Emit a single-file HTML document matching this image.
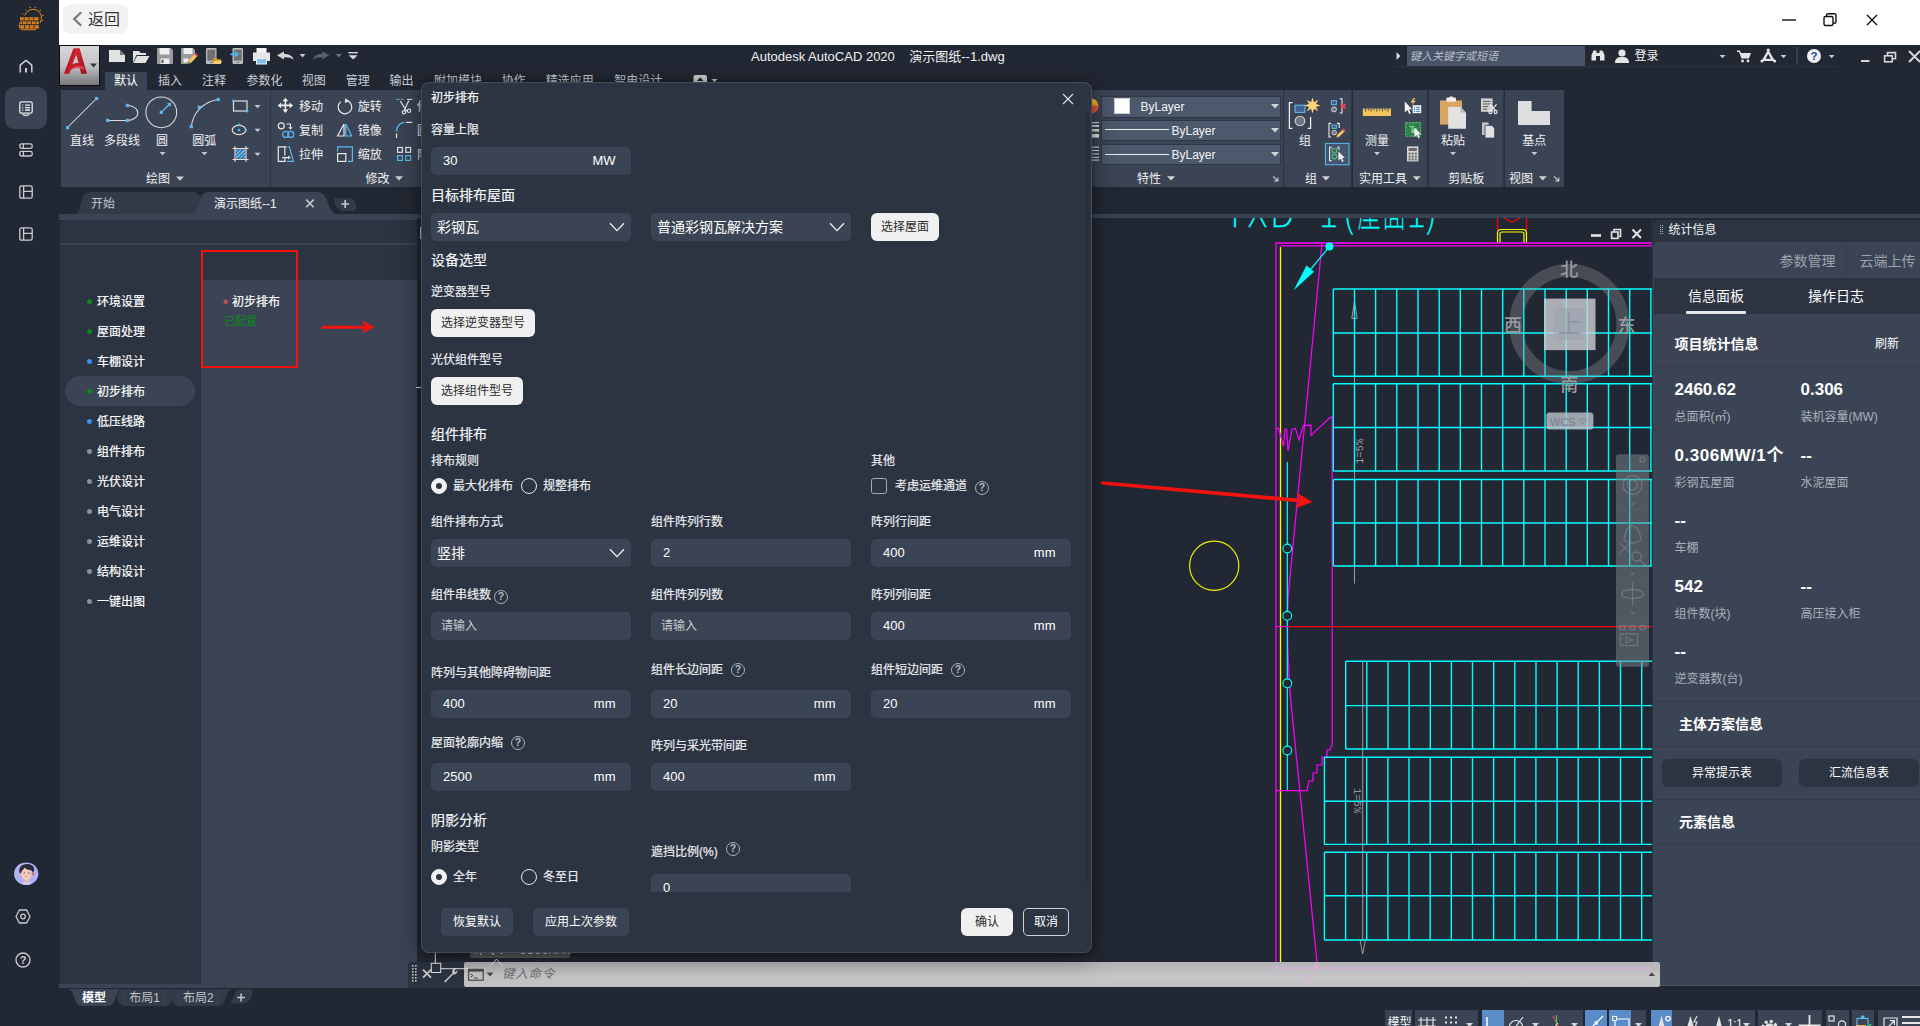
<!DOCTYPE html>
<html lang="zh-CN">
<head>
<meta charset="utf-8">
<title>初步排布</title>
<style>
*{box-sizing:border-box;margin:0;padding:0}
html,body{width:1920px;height:1026px;overflow:hidden;background:#222833}
body{position:relative;font-family:"Liberation Sans","Noto Sans CJK SC",sans-serif;font-size:12px;color:#e6e8ec;line-height:1}
.abs{position:absolute}
.t{position:absolute;white-space:nowrap;line-height:1}
svg{position:absolute;overflow:visible}
/* ---------- app chrome ---------- */
#side{left:0;top:0;width:59px;height:1026px;background:#222833}
#topbar{left:59px;top:0;width:1861px;height:45px;background:#fff}
#back{left:63px;top:4px;width:65px;height:30px;border-radius:8px;background:#f2f2f2}
#back .t{left:25px;top:7.5px;font-size:16px;color:#333}
/* ---------- autocad ---------- */
#cad{left:59px;top:45px;width:1861px;height:981px;background:#222833}
.rp{position:absolute;top:90px;height:96px;background:#3b4454}
.rl{position:absolute;font-size:13px;color:#e8eaee;white-space:nowrap;line-height:1}
.mt{position:absolute;top:73px;font-size:13px;color:#c5cad3;white-space:nowrap;line-height:1}
/* ---------- left workflow panel ---------- */
#wf{left:60px;top:220px;width:354px;height:763px;background:#2c3341;border-radius:4px 4px 0 0}
.nav{position:absolute;left:97px;font-size:12px;color:#fff;white-space:nowrap;line-height:1}
.dot{position:absolute;left:87px;width:5px;height:5px;border-radius:50%}
/* ---------- dialog ---------- */
#dlg{left:421px;top:82px;width:671px;height:870.5px;background:#2c3341;border-radius:8px;box-shadow:0 3px 28px rgba(0,0,0,.42),0 1px 6px rgba(0,0,0,.3),inset 0 0 0 1px #434a58}
#dlg .h{position:absolute;left:10px;font-size:14px;color:#f4f5f7;white-space:nowrap;line-height:1;-webkit-text-stroke:.2px #f4f5f7}
#dlg .l{position:absolute;font-size:12px;color:#eceef1;white-space:nowrap;line-height:1;-webkit-text-stroke:.2px #eceef1}
.in{position:absolute;width:200px;height:28px;border-radius:5px;background:#3b4454;font-size:13px;color:#fff;line-height:28px;padding-left:12px;white-space:nowrap}
.in i{position:absolute;right:15.5px;top:0;font-style:normal;font-size:13px}
.in.ph{color:#c9ccd2;padding-left:10px;font-size:12px}
.sel{padding-left:6px;font-size:14px}
.btnw{position:absolute;height:28px;border-radius:6px;background:#f0f0f0;color:#2b2b2b;font-size:12px;line-height:28px;text-align:center;white-space:nowrap}
.btnd{position:absolute;height:28px;border-radius:5px;background:#3b4454;color:#fff;font-size:12px;line-height:28px;text-align:center;white-space:nowrap}
.radio{position:absolute;width:16px;height:16px;border-radius:50%;border:1.3px solid #e8e8e8}
.radio.on{background:#f2f2f2;border-color:#f2f2f2}
.radio.on:after{content:"";position:absolute;left:3.5px;top:3.5px;width:6.4px;height:6.4px;border-radius:50%;background:#2c3341}
.q{position:absolute;width:14px;height:14px;border-radius:50%;border:1.4px solid #adb2bb;color:#b4b8c0;font-size:10.5px;font-weight:bold;line-height:11.2px;text-align:center}
/* ---------- right info panel ---------- */
#info{left:1653px;top:243px;width:267px;height:740px;background:#3b4454}
#info .v{position:absolute;font-size:16px;font-weight:bold;color:#fff;white-space:nowrap;line-height:1}
#info .k{position:absolute;font-size:12px;color:#b9bec8;white-space:nowrap;line-height:1}
#info .s{position:absolute;font-size:13px;font-weight:bold;color:#fff;white-space:nowrap;line-height:1}
.hr{position:absolute;left:0;width:267px;height:1px;background:#4a5364}
</style>
</head>
<body>
<div id="cad" class="abs"></div>
<div id="side" class="abs"></div>
<div id="topbar" class="abs"></div>
<div id="back" class="abs"><span class="t">返回</span></div>
<span class="t" style="left:751px;top:50.0px;font-size:13px;color:#f2f2f2;">Autodesk AutoCAD 2020&nbsp;&nbsp;&nbsp;&nbsp;演示图纸--1.dwg</span>
<div class="abs" style="left:1393px;top:66px;width:446px;height:1px;background:#2b313d;"></div>
<div class="abs" style="left:1407px;top:46px;width:178px;height:20px;background:#4a5468;"></div>
<span class="t" style="left:1410px;top:50.5px;font-size:11px;color:#b9bec8;font-style:italic">键入关键字或短语</span>
<span class="t" style="left:1634.5px;top:50.0px;font-size:12px;color:#f2f2f2;">登录</span>
<div class="abs" style="left:105px;top:72px;width:42px;height:18px;background:#3b4454;border-radius:2px 2px 0 0"></div>
<span class="t" style="left:114px;top:75.1px;font-size:12px;color:#fff;">默认</span>
<span class="t" style="left:158px;top:75.1px;font-size:12px;color:#c9ced6;">插入</span>
<span class="t" style="left:202px;top:75.1px;font-size:12px;color:#c9ced6;">注释</span>
<span class="t" style="left:246.5px;top:75.1px;font-size:12px;color:#c9ced6;">参数化</span>
<span class="t" style="left:301.7px;top:75.1px;font-size:12px;color:#c9ced6;">视图</span>
<span class="t" style="left:345.7px;top:75.1px;font-size:12px;color:#c9ced6;">管理</span>
<span class="t" style="left:389.5px;top:75.1px;font-size:12px;color:#c9ced6;">输出</span>
<span class="t" style="left:434px;top:75.1px;font-size:12px;color:#c9ced6;">附加模块</span>
<span class="t" style="left:501.7px;top:75.1px;font-size:12px;color:#c9ced6;">协作</span>
<span class="t" style="left:545.7px;top:75.1px;font-size:12px;color:#c9ced6;">精选应用</span>
<span class="t" style="left:614.3px;top:75.1px;font-size:12px;color:#c9ced6;">智电设计</span>
<div class="abs" style="left:61px;top:90px;width:209px;height:97px;background:#3b4454;"></div>
<div class="abs" style="left:271px;top:90px;width:160px;height:97px;background:#3b4454;"></div>
<div class="abs" style="left:1085px;top:90px;width:198px;height:97px;background:#3b4454;"></div>
<div class="abs" style="left:1284px;top:90px;width:67px;height:97px;background:#3b4454;"></div>
<div class="abs" style="left:1352.5px;top:90px;width:75px;height:97px;background:#3b4454;"></div>
<div class="abs" style="left:1428.5px;top:90px;width:75px;height:97px;background:#3b4454;"></div>
<div class="abs" style="left:1504.5px;top:90px;width:59.5px;height:97px;background:#3b4454;"></div>
<span class="t" style="left:70px;top:134.5px;font-size:12px;color:#f0f1f3;">直线</span>
<span class="t" style="left:104px;top:134.5px;font-size:12px;color:#f0f1f3;">多段线</span>
<span class="t" style="left:156px;top:134.5px;font-size:12px;color:#f0f1f3;">圆</span>
<span class="t" style="left:192.3px;top:134.5px;font-size:12px;color:#f0f1f3;">圆弧</span>
<span class="t" style="left:146px;top:173.2px;font-size:12px;color:#f0f1f3;">绘图</span>
<span class="t" style="left:299px;top:100.5px;font-size:12px;color:#f0f1f3;">移动</span>
<span class="t" style="left:357.8px;top:100.5px;font-size:12px;color:#f0f1f3;">旋转</span>
<span class="t" style="left:417px;top:100.5px;font-size:12px;color:#f0f1f3;">修剪</span>
<span class="t" style="left:299px;top:124.5px;font-size:12px;color:#f0f1f3;">复制</span>
<span class="t" style="left:357.8px;top:124.5px;font-size:12px;color:#f0f1f3;">镜像</span>
<span class="t" style="left:417px;top:124.5px;font-size:12px;color:#f0f1f3;">圆角</span>
<span class="t" style="left:299px;top:148.6px;font-size:12px;color:#f0f1f3;">拉伸</span>
<span class="t" style="left:357.8px;top:148.6px;font-size:12px;color:#f0f1f3;">缩放</span>
<span class="t" style="left:417px;top:148.6px;font-size:12px;color:#f0f1f3;">阵列</span>
<span class="t" style="left:365.5px;top:173.2px;font-size:12px;color:#f0f1f3;">修改</span>
<div class="abs" style="left:1101px;top:95.5px;width:180px;height:22px;background:#4c586c;border:1px solid #2f3644"></div>
<div class="abs" style="left:1101px;top:119.5px;width:180px;height:21px;background:#4c586c;border:1px solid #2f3644"></div>
<div class="abs" style="left:1101px;top:143.5px;width:180px;height:21px;background:#4c586c;border:1px solid #2f3644"></div>
<div class="abs" style="left:1114px;top:98px;width:16px;height:16px;background:#fff;border:1px solid #d0d0d0"></div>
<span class="t" style="left:1140.5px;top:100.5px;font-size:12px;color:#f4f4f4;">ByLayer</span>
<span class="t" style="left:1171.5px;top:125.0px;font-size:12px;color:#f4f4f4;">ByLayer</span>
<span class="t" style="left:1171.5px;top:149.0px;font-size:12px;color:#f4f4f4;">ByLayer</span>
<div class="abs" style="left:1105px;top:129px;width:64px;height:1px;background:#f0f0f0;"></div>
<div class="abs" style="left:1105px;top:153.5px;width:64px;height:1px;background:#f0f0f0;"></div>
<span class="t" style="left:1137px;top:173.2px;font-size:12px;color:#f0f1f3;">特性</span>
<span class="t" style="left:1299px;top:134.5px;font-size:12px;color:#f0f1f3;">组</span>
<span class="t" style="left:1305px;top:173.2px;font-size:12px;color:#f0f1f3;">组</span>
<span class="t" style="left:1365px;top:134.5px;font-size:12px;color:#f0f1f3;">测量</span>
<span class="t" style="left:1359px;top:173.2px;font-size:12px;color:#f0f1f3;">实用工具</span>
<span class="t" style="left:1441px;top:134.5px;font-size:12px;color:#f0f1f3;">粘贴</span>
<span class="t" style="left:1448.3px;top:173.2px;font-size:12px;color:#f0f1f3;">剪贴板</span>
<span class="t" style="left:1522.3px;top:134.5px;font-size:12px;color:#f0f1f3;">基点</span>
<span class="t" style="left:1509px;top:173.2px;font-size:12px;color:#f0f1f3;">视图</span>
<svg style="left:0;top:0" width="1920" height="230" viewBox="0 0 1920 230">
<path d="M72 215 C79 215 79 209 81 203 C83 196 84 192 91 192 H193 C200 192 201 198 201 203 C201 210 198 215 190 215 Z" fill="#333a48"/>
<path d="M188 215 C196 215 197 209 199 203 C201 196 202 192 209 192 H317 C324 192 326 197 328 203 C330 210 333 215 341 215 Z" fill="#3b4454"/>
<path d="M334 198 H349 C354 198 356 203 356 206 C356 209 355 211 352 211 H343 C337 211 334 204 334 198 Z" fill="#333a48"/>
<path d="M306.2 199.6 L313.6 207.2 M313.6 199.6 L306.2 207.2" stroke="#c3c7cf" stroke-width="1.6"/>
<path d="M341.3 204 H349 M345.2 200 V208" stroke="#c3c7cf" stroke-width="1.6"/>
</svg>
<span class="t" style="left:91px;top:198.0px;font-size:12px;color:#c3c8d1;">开始</span>
<span class="t" style="left:214px;top:198.0px;font-size:12px;color:#f0f1f3;">演示图纸--1</span>
<svg style="left:0;top:0" width="1920" height="200" viewBox="0 0 1920 200">
<defs>
<linearGradient id="agr" x1="0" y1="0" x2="0" y2="1"><stop offset="0" stop-color="#d8d8da"/><stop offset=".5" stop-color="#c2c2c4"/><stop offset="1" stop-color="#767678"/></linearGradient>
<linearGradient id="ared" x1="0" y1="0" x2="1" y2="1"><stop offset="0" stop-color="#e8313a"/><stop offset="1" stop-color="#9c0f17"/></linearGradient>
<path id="dd" d="M-3 -1.5 H3 L0 1.8 Z"/>
</defs>
<!-- A button -->
<rect x="59.5" y="45.5" width="40" height="40" fill="url(#agr)" stroke="#0c0c0c" stroke-width="1"/>
<path d="M64 73.8 L73.6 48.2 H79.6 L87 73.8 H81.2 L79.8 68 C75.6 67 72.6 68.2 70.6 70 L69.4 73.8 Z M72.4 64.6 C74.4 63.2 76.8 62.8 78.6 63.2 L76.2 54.4 Z" fill="url(#ared)" fill-rule="evenodd"/><path d="M66.2 73.8 L74.8 52 L73.6 48.2 L64 73.8 Z" fill="#b5121b" opacity=".55"/><path d="M70.6 70 C73 66 78 64.8 83.4 66.4 L84.6 70.4 C79.6 67.6 74.6 67.8 70.6 70 Z" fill="#f2555c" opacity=".7"/>
<path d="M90 63.6 H97 L93.5 67.4 Z" fill="#2c3341"/>
<!-- QAT -->
<g fill="#e2e2e2">
<path d="M109 50 H120 L125 55 V62 H109 Z"/><path d="M120 50 V55 H125 Z" fill="#222833" opacity=".55"/>
<path d="M133 63 V51 H139 L140.5 53 H146 V55 H136.5 L133 63 Z"/><path d="M137 56 H149.5 L145.5 63 H133.5 Z"/>
</g>
<g>
<path d="M157 48 H171 L173 50 V64 H157 Z" fill="#9a9a9a"/><rect x="159.5" y="48" width="10" height="6.5" fill="#eee"/><rect x="160.5" y="58.5" width="9" height="5.5" fill="#eee"/><rect x="161.5" y="59.8" width="2" height="3.2" fill="#555"/>
<path d="M181 48 H193 L195 50 V58 L189 64 H181 Z" fill="#9a9a9a"/><rect x="183.5" y="48" width="9" height="6" fill="#eee"/><rect x="183.5" y="58.5" width="5" height="4" fill="#eee"/>
<path d="M187.5 63.5 L189 60 L195 53.5 L197.5 56 L191.5 62.5 Z" fill="#f1c45c"/><path d="M194.2 54.3 L195.6 52.8 L198 55.2 L196.7 56.7 Z" fill="#e8464a"/><path d="M187.5 63.5 L188.2 61.8 L189.4 63 Z" fill="#222"/>
<rect x="206" y="48" width="10.5" height="16" rx="1.2" fill="#bdbdbd"/><rect x="207.3" y="49.6" width="8" height="11" fill="#707070"/><rect x="210" y="62" width="2.6" height="1" fill="#777"/>
<path d="M213 64 V58 H216.5 L217.5 59.2 H221 V64 Z" fill="#d79a2b"/><path d="M214.6 60.8 H222 L220.5 64 H213 Z" fill="#f7d272"/>
<rect x="232.5" y="48" width="10.5" height="16" rx="1.2" fill="#bdbdbd"/><rect x="233.8" y="49.6" width="8" height="11" fill="#707070"/><rect x="236.5" y="62" width="2.6" height="1" fill="#777"/>
<path d="M230.5 53.2 H235 V51 L239.5 54.2 L235 57.4 V55.2 H230.5 Z" fill="#4eb3ee"/>
<rect x="256.5" y="48" width="10" height="5" fill="#f4f4f4"/><path d="M253 52.5 H270 V61 H266.5 V58 H256.5 V61 H253 Z" fill="#e6e6e6"/><rect x="256.5" y="58.5" width="10" height="5.5" fill="#7cc4f2" stroke="#f0f0f0" stroke-width="1"/>
<path d="M277 55.3 L284 51.5 V54 C290 54 293 56.5 293.5 60 C291.5 57.8 289 57.2 284 57.3 V59.6 Z" fill="#d6d6d6"/>
<use href="#dd" x="302.5" y="55.6" fill="#c8c8c8"/>
<path d="M329.3 55.3 L322.3 51.5 V54 C316.3 54 313.3 56.5 312.8 60 C314.8 57.8 317.3 57.2 322.3 57.3 V59.6 Z" fill="#5a6270"/>
<use href="#dd" x="338.7" y="55.6" fill="#6e7683"/>
<rect x="348.3" y="52" width="9.6" height="1.4" fill="#d6d6d6"/><path d="M348.6 55.2 H357.6 L353.1 59.6 Z" fill="#d6d6d6"/>
</g>
<!-- tab bar extra icon -->
<rect x="693.5" y="75" width="13.5" height="9" rx="2" fill="#d4d4d4"/><path d="M697 81 L700.2 77.2 L703.4 81 Z" fill="#222833"/><use href="#dd" x="714.5" y="80.5" fill="#c8c8c8"/>
<!-- search row icons -->
<path d="M1396.5 52 L1400.5 56 L1396.5 60 Z" fill="#d6d6d6"/>
<g fill="#e4e4e4">
<path d="M1591.5 60.5 V55 L1593.5 50.5 H1596.5 V53 H1599.5 V50.5 H1602.5 L1604.5 55 V60.5 H1600 V56 H1596 V60.5 Z"/>
<circle cx="1622" cy="53" r="3.6"/><path d="M1615 63 C1615 58 1618 57 1622 57 C1626 57 1629 58 1629 63 Z"/>
<path d="M1737 50.5 H1739.8 L1741 53 H1751 L1749 58.5 H1741.5 L1739 52 H1737 Z"/><circle cx="1742.5" cy="61" r="1.4"/><circle cx="1748" cy="61" r="1.4"/>
</g>
<use href="#dd" x="1722.5" y="56.5" fill="#c8c8c8"/>
<path d="M1768.2 49.5 L1775 61 H1761.5 Z M1768.2 54 L1765.6 58.8 H1770.9 Z" fill="#e4e4e4" fill-rule="evenodd"/><circle cx="1768.2" cy="50" r="1.6" fill="#e4e4e4"/><circle cx="1762" cy="61" r="1.6" fill="#e4e4e4"/><circle cx="1774.6" cy="61" r="1.6" fill="#e4e4e4"/>
<use href="#dd" x="1783.5" y="56.5" fill="#c8c8c8"/>
<rect x="1796.5" y="47" width="1" height="18" fill="#4a5468"/>
<circle cx="1814" cy="56" r="7" fill="#f2f2f2"/><text x="1814" y="60.3" font-size="11.5" font-weight="bold" font-family="Liberation Sans,sans-serif" text-anchor="middle" fill="#1c3fbf">?</text>
<use href="#dd" x="1831.7" y="56.5" fill="#c8c8c8"/>
<rect x="1861" y="60" width="8.5" height="2" fill="#d6d6d6"/>
<g fill="none" stroke="#d6d6d6" stroke-width="1.6"><path d="M1887.5 55 V52.6 H1895.5 V58.8 H1893"/><rect x="1884.6" y="55.8" width="7.6" height="6"/><path d="M1909 51 L1920 62 M1920 51 L1909 62" stroke-width="2"/></g>
<!-- draw panel big icons -->
<g fill="none" stroke="#dcdcdc" stroke-width="1.05">
<path d="M67.5 127.5 L96.5 98.5"/>
<path d="M107.7 120.4 H127.4 A10.4 7.5 0 0 0 127.4 105.4"/>
<circle cx="161.3" cy="112.3" r="15.4"/>
<path d="M191.3 126.6 C193 112 204 101.5 218.3 99.5"/>
</g>
<path d="M161.3 112.3 L169 104.8" stroke="#5bb8f0" stroke-width="1.3"/><path d="M171.4 102.4 L170.4 107 L166.8 103.4 Z" fill="#5bb8f0"/>
<g fill="#5bb8f0">
<rect x="66" y="126" width="3.2" height="3.2"/><rect x="95" y="97" width="3.2" height="3.2"/>
<rect x="106.1" y="118.8" width="3.2" height="3.2"/><rect x="125.8" y="118.8" width="3.2" height="3.2"/><rect x="125.8" y="103.8" width="3.2" height="3.2"/>
<rect x="159.7" y="110.7" width="3.2" height="3.2"/>
<rect x="189.7" y="125" width="3.2" height="3.2"/><rect x="197.7" y="105.7" width="3.2" height="3.2"/><rect x="216.7" y="97.9" width="3.2" height="3.2"/>
</g>
<use href="#dd" x="162.5" y="153.5" fill="#c8c8c8"/><use href="#dd" x="204.4" y="153.5" fill="#c8c8c8"/>
<path d="M176 176.5 H184 L180 180.8 Z" fill="#d0d0d0"/>
<!-- draw panel small icons -->
<g fill="none" stroke="#e0e0e0" stroke-width="1.2">
<rect x="233.5" y="101" width="13.5" height="10"/>
<ellipse cx="239" cy="130" rx="6.8" ry="4.6"/>
<path d="M232.5 148.5 H248.5 M232.5 159.5 H248.5 M235 146.3 V161.7 M246 146.3 V161.7"/>
</g>
<rect x="236" y="149.5" width="9" height="9" fill="#5bb8f0"/><path d="M236 153 L239.5 149.5 M236 156.5 L243 149.5 M238 158.5 L245 151.5 M241.5 158.5 L245 155" stroke="#3b4454" stroke-width="1"/>
<g fill="#5bb8f0"><rect x="232.2" y="99.7" width="2.6" height="2.6"/><rect x="245.7" y="109.7" width="2.6" height="2.6"/><rect x="238" y="123.6" width="2.2" height="2.2"/><rect x="238" y="128.9" width="2.2" height="2.2"/><rect x="244.7" y="128.9" width="2.2" height="2.2"/></g>
<use href="#dd" x="257.5" y="106.5" fill="#c8c8c8"/><use href="#dd" x="257.5" y="130.3" fill="#c8c8c8"/><use href="#dd" x="257.5" y="154.3" fill="#c8c8c8"/>
<rect x="270" y="90" width="1" height="97" fill="#2c3341"/>
<!-- modify icons -->
<g fill="#f0f0f0">
<path d="M285.4 97.7 L288.2 101.2 H286.2 V104.6 H289.6 V102.6 L293.1 105.4 L289.6 108.2 V106.2 H286.2 V109.6 H288.2 L285.4 113.1 L282.6 109.6 H284.6 V106.2 H281.2 V108.2 L277.7 105.4 L281.2 102.6 V104.6 H284.6 V101.2 H282.6 Z"/>
</g>
<g fill="none" stroke="#e8e8e8" stroke-width="1.2">
<path d="M347.3 100.6 A6.8 6.8 0 1 1 340.8 101.6"/>
<circle cx="281.3" cy="125.8" r="3"/>
<path d="M286.5 124 H290.5 V127.6"/>
<path d="M344 124 V136 H337.5 Z"/>
<path d="M396.5 138 V133.5 M406 122.4 H412.2"/>
<path d="M286.5 146.8 H278.3 V161.4 H285 V158"/>
<path d="M284.8 146.8 V155.5"/><path d="M282 157.6 H288.5"/>
<rect x="337.6" y="153.6" width="8.2" height="7.8"/>
<rect x="397.6" y="147.5" width="4.8" height="4.8"/><rect x="405.8" y="147.5" width="4.8" height="4.8"/>
</g>
<path d="M345.2 98.2 L349.6 101.2 L344.8 103 Z" fill="#e8e8e8"/>
<path d="M288.4 127.2 H292.6 L290.5 129.8 Z" fill="#e8e8e8"/>
<path d="M288 155.6 L290.8 157.6 L288 159.6 Z" fill="#e8e8e8"/>
<g fill="none" stroke="#5bb8f0" stroke-width="1.2">
<circle cx="285.6" cy="134.4" r="3"/><circle cx="290.8" cy="134.4" r="3"/>
<path d="M345.8 124 V136 H351.6 Z"/>
<path d="M396.5 131.6 C396.5 126 400 122.6 404.6 122.4"/>
<path d="M287.5 146.8 H289.4 L293.4 161.4 H287"/>
<path d="M337.6 151.5 V146.8 H352.4 V161.4 H348"/>
<rect x="397.6" y="155.6" width="4.8" height="4.8"/><rect x="405.8" y="155.6" width="4.8" height="4.8"/>
</g>
<!-- scissors -->
<path d="M396.3 99.4 H399.5 M401 99.4 H403.5" stroke="#5bb8f0" stroke-width="1"/><path d="M407 99.4 H412.2" stroke="#e8e8e8" stroke-width="1"/>
<g fill="none" stroke="#e8e8e8" stroke-width="1.2"><path d="M400.3 101 L406.8 111.5 M408.8 100.6 L404.2 110.5"/><circle cx="404" cy="112.3" r="1.7"/><circle cx="409" cy="110.8" r="1.7"/></g>
<path d="M395 176.3 H403 L399 180.6 Z" fill="#d0d0d0"/>
<!-- properties -->
<circle cx="1091" cy="106" r="7.5" fill="#f59a23"/><path d="M1091 106 L1098.5 106 A7.5 7.5 0 0 1 1091 113.5 Z" fill="#e5533d"/><path d="M1091 106 V113.5 A7.5 7.5 0 0 1 1086 112 Z" fill="#8a4be0"/><path d="M1091 106 L1091 98.5 A7.5 7.5 0 0 1 1097 102 Z" fill="#f7c53b"/>
<g fill="#e0e0e0"><rect x="1091" y="122" width="8" height="1.2"/><rect x="1091" y="125" width="8" height="1.8"/><rect x="1091" y="129" width="8" height="2.6"/><rect x="1091" y="134" width="8" height="3.6"/>
<rect x="1091" y="146.6" width="8" height="1" /><rect x="1091" y="150" width="8" height="1"/><rect x="1091" y="153.4" width="8" height="1"/><rect x="1091" y="156.8" width="8" height="1"/><rect x="1091" y="159.6" width="8" height="1"/></g>
<g fill="#d4d4d4"><path d="M1271 104 H1279 L1275 108.4 Z"/><path d="M1271 128 H1279 L1275 132.4 Z"/><path d="M1271 152 H1279 L1275 156.4 Z"/><path d="M1167 176.3 H1175 L1171 180.6 Z"/></g>
<path d="M1273.2 176.4 L1277.6 180.8 M1277.8 177.4 V181 H1274.2" fill="none" stroke="#d0d0d0" stroke-width="1.1"/>
<rect x="1283" y="90" width="1.2" height="97" fill="#2c3341"/>
<!-- group panel -->
<g fill="none" stroke="#ececec" stroke-width="1.3"><path d="M1292.5 102.6 H1289.4 V128.4 H1292.5 M1307.6 128.4 H1310.6 V117"/></g>
<rect x="1295" y="105.2" width="10" height="7.2" fill="#40628c" stroke="#5bb8f0" stroke-width="1.1"/>
<circle cx="1300" cy="121" r="4.8" fill="#6f7684" stroke="#cfcfcf" stroke-width="1.1"/>
<path id="star" d="M1312.5 97.5 L1314 102.2 L1318.2 99.8 L1316 104 L1320.6 105.5 L1316 107 L1318.2 111.2 L1314 108.8 L1312.5 113.5 L1311 108.8 L1306.8 111.2 L1309 107 L1304.4 105.5 L1309 104 L1306.8 99.8 L1311 102.2 Z" fill="#ffd27a"/>
<path d="M1322 176.3 H1330 L1326 180.6 Z" fill="#d0d0d0"/>
<!-- small group icons -->
<g fill="none" stroke="#ececec" stroke-width="1.1"><path d="M1339.6 98.8 H1342 V113 H1339.6"/><path d="M1331.2 123.4 H1329 V137 H1331.2 M1337 123.4 H1339.2 V128"/><path d="M1331.8 147.2 H1329.6 V160.8 H1331.8 M1337 147.2 H1339 V150"/></g>
<rect x="1331.4" y="100.6" width="5" height="4" fill="#40628c" stroke="#5bb8f0" stroke-width="1"/><circle cx="1334" cy="109.4" r="2.5" fill="#6f7684" stroke="#cfcfcf" stroke-width="1"/>
<path d="M1340.8 103.8 L1345.4 108.6 M1345.4 103.8 L1340.8 108.6" stroke="#f0424d" stroke-width="1.7"/>
<rect x="1332" y="125" width="4.4" height="3.4" fill="#40628c" stroke="#5bb8f0" stroke-width="1"/><circle cx="1334.2" cy="132.6" r="2.3" fill="#6f7684" stroke="#cfcfcf" stroke-width="1"/>
<path d="M1336.3 137.6 L1337.2 134.8 L1343 129.2 L1345 131.2 L1339.2 136.8 Z" fill="#f1c45c"/><path d="M1342.2 130 L1343.6 128.6 L1345.6 130.6 L1344.2 132 Z" fill="#e8464a"/>
<rect x="1325.4" y="143.4" width="23.6" height="21.4" fill="#43556f" stroke="#5bb8f0" stroke-width="1"/>
<g fill="none" stroke="#ececec" stroke-width="1.1"><path d="M1331.8 147.2 H1329.6 V160.8 H1331.8 M1337 147.2 H1339 V150"/></g>
<rect x="1332.2" y="148.8" width="4.4" height="3.4" fill="none" stroke="#58c46a" stroke-width="1.1"/><circle cx="1334.4" cy="156.4" r="2.3" fill="none" stroke="#58c46a" stroke-width="1.1"/>
<path d="M1338.4 151.4 L1338.4 160.6 L1340.6 158.6 L1342.2 162 L1343.6 161.3 L1342 158 L1344.8 157.8 Z" fill="#f2f2f2"/>
<!-- utilities -->
<rect x="1351" y="90" width="1.4" height="97" fill="#2c3341"/>
<rect x="1362.8" y="108.6" width="28.2" height="7.4" fill="#f2c45c"/><path d="M1365.6 108.6 v3 M1368.4 108.6 v2 M1371.2 108.6 v3 M1374 108.6 v2 M1376.8 108.6 v3 M1379.6 108.6 v2 M1382.4 108.6 v3 M1385.2 108.6 v2 M1388 108.6 v3" stroke="#3b4454" stroke-width=".9"/>
<use href="#dd" x="1377" y="153.5" fill="#c8c8c8"/>
<path d="M1412.8 176.3 H1420.8 L1416.8 180.6 Z" fill="#d0d0d0"/>
<path d="M1404.8 101.6 V112.4 L1407.4 110 L1409.2 114 L1410.8 113.2 L1409 109.4 L1412.2 109.2 Z" fill="#f2f2f2"/><rect x="1412.6" y="105.2" width="8.6" height="8" fill="#f2f2f2"/><path d="M1414 107.4 h1.2 M1416.2 107.4 h3.6 M1414 109.4 h1.2 M1416.2 109.4 h3.6 M1414 111.4 h1.2 M1416.2 111.4 h3.6" stroke="#2f7fd0" stroke-width="1"/><path d="M1413.4 98 L1410.6 102.4 H1413 L1411.6 105.6 L1416 100.8 H1413.4 L1415.2 98 Z" fill="#f2c45c"/>
<rect x="1405.6" y="122.6" width="15" height="13.6" fill="#2f7f4a" stroke="#58c46a" stroke-width="1.1" stroke-dasharray="2 1.2"/><path d="M1408.4 125.4 H1414.6 V131 M1411 128 H1417.6 V133.6 H1411 Z" fill="#7bd08a" stroke="#2f7f4a" stroke-width=".8"/><path d="M1414.4 127.6 V137 L1416.8 135 L1418.4 138.4 L1419.8 137.7 L1418.2 134.4 L1421.2 134.2 Z" fill="#f2f2f2"/>
<rect x="1407" y="146.4" width="11.4" height="15" fill="#d6d6d6"/><rect x="1408.6" y="148" width="8.2" height="3" fill="#6a6a6a"/><g fill="#6a6a6a"><rect x="1408.6" y="152.6" width="2" height="2"/><rect x="1411.7" y="152.6" width="2" height="2"/><rect x="1414.8" y="152.6" width="2" height="2"/><rect x="1408.6" y="155.6" width="2" height="2"/><rect x="1411.7" y="155.6" width="2" height="2"/><rect x="1414.8" y="155.6" width="2" height="2"/><rect x="1408.6" y="158.4" width="2" height="2"/><rect x="1411.7" y="158.4" width="2" height="2"/><rect x="1414.8" y="158.4" width="2" height="2"/></g>
<!-- clipboard -->
<rect x="1427.2" y="90" width="1.4" height="97" fill="#2c3341"/>
<path d="M1440 100.4 H1462 V124.6 H1440 Z" fill="#d9a662"/><rect x="1446.4" y="97.6" width="9.6" height="4.2" rx="1" fill="#ececec"/><rect x="1449.4" y="96.4" width="3.6" height="2.4" rx="1" fill="#ececec"/>
<path d="M1448.2 107 H1460.6 L1466 112.4 V128.8 H1448.2 Z" fill="#e2e2e2"/><path d="M1460.6 107 V112.4 H1466 Z" fill="#b8b8b8"/>
<use href="#dd" x="1453" y="153.5" fill="#c8c8c8"/>
<rect x="1481" y="98.4" width="11.6" height="13.4" fill="#cfcfcf"/><path d="M1483 101.4 h7.6 M1483 104 h7.6 M1483 106.6 h5 M1483 109.2 h4" stroke="#5a5a5a" stroke-width="1"/>
<g fill="none" stroke="#f4f4f4" stroke-width="1.1"><path d="M1490 104.4 L1495.6 110.6 M1496.6 104.4 L1491 110.6"/><circle cx="1490.4" cy="112" r="1.6"/><circle cx="1495.6" cy="112" r="1.6"/></g>
<path d="M1482 122.4 H1488.6 V135 H1482 Z" fill="#c4c4c4"/><path d="M1485 125.4 H1491.8 L1494.6 128.2 V138 H1485 Z" fill="#e2e2e2" stroke="#3b4454" stroke-width=".8"/>
<!-- view -->
<rect x="1503.2" y="90" width="1.4" height="97" fill="#2c3341"/>
<path d="M1518 101 H1531.6 V111 H1550 V125 H1518 Z" fill="#dedede"/>
<use href="#dd" x="1534.3" y="153.5" fill="#c8c8c8"/>
<path d="M1538.8 176.3 H1546.8 L1542.8 180.6 Z" fill="#d0d0d0"/>
<path d="M1554.2 176.4 L1558.6 180.8 M1558.8 177.4 V181 H1555.2" fill="none" stroke="#d0d0d0" stroke-width="1.1"/>
</svg>

<svg style="left:14px;top:4px" width="32" height="30" viewBox="14 4 32 30">
<g fill="none" stroke="#f08a16" stroke-width="1" stroke-linecap="round">
<path d="M24.9 15 A8.6 8.6 0 1 1 40.2 22.6"/>
<path d="M19.6 23.6 C18.2 27.2 20.2 30 23.4 29.7 H35.6"/>
</g>
<g fill="#f08a16"><circle cx="30.3" cy="7.4" r=".7"/><circle cx="35.4" cy="7.6" r=".7"/><circle cx="40.2" cy="10.4" r=".7"/><circle cx="42.9" cy="15.4" r=".7"/><circle cx="42.6" cy="20.6" r=".7"/><circle cx="25.8" cy="9.8" r=".6"/><circle cx="22.8" cy="13.8" r=".6"/>
<path d="M20 17.3 H38.4 L38.8 28.4 H20.6 Z"/></g>
<g stroke="#222833" stroke-width="1" fill="none">
<path d="M19.6 20.9 H39 M19.8 24.7 H39.2"/>
<path d="M24.2 17 V20.9 M28.8 17 V20.9 M33.6 17 V20.9 M22.4 20.9 V24.7 M27 20.9 V24.7 M31.4 20.9 V24.7 M36 20.9 V24.7 M24.6 24.7 V28.6 M29.4 24.7 V28.6 M34 24.7 V28.6" stroke-width=".9"/>
<path d="M21 18.9 h2.2 M25.4 18.9 h2.4 M30 18.9 h2.6 M34.8 18.9 h2.4 M23.6 22.8 h2.2 M28.2 22.8 h2.2 M32.6 22.8 h2.4 M21.8 26.6 h1.8 M25.8 26.6 h2.4 M30.6 26.6 h2.4 M35.2 26.6 h2.2" stroke-width=".7" opacity=".55"/>
</g></svg>
<svg style="left:19px;top:59px" width="14" height="15" viewBox="0 0 14 15"><path d="M1.2 13.6 V6.2 L7 1.4 L12.8 6.2 V13.6" fill="none" stroke="#c9cdd5" stroke-width="1.5" stroke-linejoin="round"/><path d="M7 9 V13.6" stroke="#c9cdd5" stroke-width="2"/></svg>
<div class="abs" style="left:5px;top:87px;width:42px;height:42px;background:#3b4454;border-radius:9px"></div>
<svg style="left:19px;top:101px" width="14" height="15" viewBox="0 0 14 15"><g fill="none" stroke="#e8eaee" stroke-width="1.3"><rect x=".8" y=".8" width="12.4" height="11.4" rx="1.6"/><path d="M3.2 4.2 h1 M6 4.2 h5 M3.2 6.6 h1 M6 6.6 h5 M3.2 9 h1 M6 9 h5"/><path d="M3.5 13.6 q3.5 1.6 7 0" stroke-width="1.1"/></g></svg>
<svg style="left:19px;top:143px" width="14" height="14" viewBox="0 0 14 14"><g fill="none" stroke="#c9cdd5" stroke-width="1.3"><rect x=".8" y=".8" width="12.4" height="4.6" rx="1.8"/><rect x=".8" y="8.4" width="12.4" height="4.6" rx="1.8"/><path d="M4.4 .8 v4.6 M4.4 8.4 v4.6"/></g></svg>
<svg style="left:19px;top:185px" width="14" height="14" viewBox="0 0 14 14"><g fill="none" stroke="#c9cdd5" stroke-width="1.3"><rect x=".8" y=".8" width="12.4" height="12.4" rx="1.8"/><path d="M4.6 .8 v12.4 M4.6 6.4 h8.6"/></g></svg>
<svg style="left:19px;top:227px" width="14" height="14" viewBox="0 0 14 14"><g fill="none" stroke="#c9cdd5" stroke-width="1.3"><rect x=".8" y=".8" width="12.4" height="12.4" rx="1.8"/><path d="M4.6 .8 v12.4 M4.6 6.4 h8.6"/></g></svg>
<svg style="left:14px;top:861.5px" width="24.4" height="23.4" viewBox="0 0 24.4 23.4"><defs><clipPath id="av"><ellipse cx="12.2" cy="11.7" rx="12.2" ry="11.3"/></clipPath></defs>
<g clip-path="url(#av)"><rect width="25" height="24" fill="#b2b0f6"/>
<path d="M8.2 24 C8.6 19.6 10.4 18 12.6 18 C15.2 18 16.8 19.6 17.4 24 Z" fill="#cfc6f4"/>
<path d="M10.6 17 H14.4 V19.4 L12.5 21 L10.6 19.4 Z" fill="#e9b7a4"/>
<circle cx="6.6" cy="12.6" r="1.1" fill="#f0b48c"/><circle cx="19" cy="12.2" r="1.25" fill="#e8703a"/>
<ellipse cx="12.6" cy="12.6" rx="5" ry="5.6" fill="#f4cbb8"/><ellipse cx="12.4" cy="9.6" rx="5.2" ry="4" fill="#f4cbb8"/>
<path d="M5.4 10.6 C4.6 6.4 7 3 9.6 2.8 C12.2 1.4 16.8 1.8 18.8 4 C20.8 5.6 20.6 8.8 19 11.2 C18.6 9.4 17.8 8.4 16.6 8.2 C13.6 8 11.6 6.8 10.4 5.6 C9.6 7.8 7.6 8.8 6.8 11.4 Z" fill="#2b2a3a"/>
<rect x="8.6" y="9.6" width="3" height="2.4" rx=".8" fill="#d8d6c6" opacity=".8"/><rect x="13.6" y="9.8" width="2.6" height="2.2" rx=".8" fill="#c9c8c2" opacity=".65"/>
<circle cx="10.2" cy="10.9" r=".55" fill="#4a3a3a"/><circle cx="14.8" cy="10.9" r=".55" fill="#4a3a3a"/>
<ellipse cx="12.2" cy="14.4" rx=".9" ry=".7" fill="#e9897a"/></g></svg>
<svg style="left:15px;top:908px" width="16" height="17" viewBox="0 0 16 17"><g fill="none" stroke="#c9cdd5" stroke-width="1.3" stroke-linejoin="round"><path d="M4.4 2 h7.2 L15 8.5 L11.6 15 H4.4 L1 8.5 Z"/><circle cx="8" cy="8.5" r="2.3"/></g></svg>
<svg style="left:15px;top:951.7px" width="16" height="16" viewBox="0 0 16 16"><circle cx="8" cy="8" r="7" fill="none" stroke="#c9cdd5" stroke-width="1.3"/><text x="8" y="12" font-size="11" font-family="Liberation Sans,sans-serif" font-weight="bold" fill="#c9cdd5" text-anchor="middle">?</text></svg>
<svg style="left:72px;top:11px" width="11" height="16" viewBox="0 0 11 16"><path d="M9.2 1.2 L2.2 8 L9.2 14.8" fill="none" stroke="#7b7b7b" stroke-width="2.3"/></svg>
<svg style="left:1780px;top:10px" width="110" height="20" viewBox="0 0 110 20"><g fill="none" stroke="#111" stroke-width="1.4"><path d="M2 10 h14"/><rect x="44" y="6.5" width="9" height="9" rx="1.5"/><path d="M46.5 6.5 v-1.2 a1.5 1.5 0 0 1 1.5-1.5 h6.5 a1.5 1.5 0 0 1 1.5 1.5 v6.5 a1.5 1.5 0 0 1 -1.5 1.5 h-1.2"/><path d="M87 5 l10 10 M97 5 l-10 10"/></g></svg>
<div class="abs" style="left:59px;top:214px;width:1861px;height:4.2px;background:#3b4454;"></div>
<div class="abs" style="left:59px;top:215px;width:362px;height:5px;background:#3b4454;"></div>
<div class="abs" style="left:59.5px;top:220px;width:357px;height:764px;background:#2c3341;border-radius:5px 5px 0 0"></div>
<div class="abs" style="left:59.5px;top:243px;width:357px;height:1.5px;background:#3b4454;"></div>
<div class="abs" style="left:201px;top:280px;width:215.5px;height:704px;background:#3b4454;"></div>
<div class="abs" style="left:416.5px;top:218px;width:4.5px;height:770px;background:#222833;"></div>
<div class="abs" style="left:419.5px;top:227px;width:1px;height:11.5px;background:#c8c8c8;"></div>
<div class="abs" style="left:416px;top:387px;width:5px;height:1px;background:#e0e0e0;"></div>
<div class="abs" style="left:59px;top:984px;width:358px;height:4px;background:#3b4454;"></div>
<div class="abs" style="left:65px;top:376px;width:130px;height:30px;background:#3b4454;border-radius:15px"></div>
<span class="dot" style="top:299.0px;background:#0a8a1a"></span>
<span class="t" style="left:97px;top:295.5px;font-size:12px;color:#fff;-webkit-text-stroke:.2px #fff">环境设置</span>
<span class="dot" style="top:329.0px;background:#0a8a1a"></span>
<span class="t" style="left:97px;top:325.5px;font-size:12px;color:#fff;-webkit-text-stroke:.2px #fff">屋面处理</span>
<span class="dot" style="top:359.0px;background:#3a8ff0"></span>
<span class="t" style="left:97px;top:355.5px;font-size:12px;color:#fff;-webkit-text-stroke:.2px #fff">车棚设计</span>
<span class="dot" style="top:389.0px;background:#0a8a1a"></span>
<span class="t" style="left:97px;top:385.5px;font-size:12px;color:#fff;-webkit-text-stroke:.2px #fff">初步排布</span>
<span class="dot" style="top:419.0px;background:#3a8ff0"></span>
<span class="t" style="left:97px;top:415.5px;font-size:12px;color:#fff;-webkit-text-stroke:.2px #fff">低压线路</span>
<span class="dot" style="top:449.0px;background:#8a8f98"></span>
<span class="t" style="left:97px;top:445.5px;font-size:12px;color:#fff;-webkit-text-stroke:.2px #fff">组件排布</span>
<span class="dot" style="top:479.0px;background:#8a8f98"></span>
<span class="t" style="left:97px;top:475.5px;font-size:12px;color:#fff;-webkit-text-stroke:.2px #fff">光伏设计</span>
<span class="dot" style="top:509.0px;background:#8a8f98"></span>
<span class="t" style="left:97px;top:505.5px;font-size:12px;color:#fff;-webkit-text-stroke:.2px #fff">电气设计</span>
<span class="dot" style="top:539.0px;background:#8a8f98"></span>
<span class="t" style="left:97px;top:535.5px;font-size:12px;color:#fff;-webkit-text-stroke:.2px #fff">运维设计</span>
<span class="dot" style="top:569.0px;background:#8a8f98"></span>
<span class="t" style="left:97px;top:565.5px;font-size:12px;color:#fff;-webkit-text-stroke:.2px #fff">结构设计</span>
<span class="dot" style="top:599.0px;background:#8a8f98"></span>
<span class="t" style="left:97px;top:595.5px;font-size:12px;color:#fff;-webkit-text-stroke:.2px #fff">一键出图</span>
<div class="abs" style="left:201px;top:250px;width:97px;height:118px;background:transparent;border:2px solid #f5120f"></div>
<span class="t" style="left:222.6px;top:295.7px;font-size:15px;color:#ee5a52;">*</span>
<span class="t" style="left:232px;top:295.5px;font-size:12px;color:#fff;-webkit-text-stroke:.2px #fff">初步排布</span>
<span class="t" style="left:224px;top:316.0px;font-size:11px;color:#0a8a1a;">已配置</span>
<svg style="left:320px;top:318px" width="58" height="18" viewBox="0 0 58 18"><path d="M3 9.3 H44" stroke="#f5120f" stroke-width="3" stroke-linecap="round"/><path d="M54.5 9 L42 2.6 L45 9 L42 15.6 Z" fill="#f5120f"/></svg>
<svg style="left:0;top:0" width="1920" height="1026" viewBox="0 0 1920 1026">
<defs><clipPath id="vp"><rect x="1092" y="218" width="560" height="744"/></clipPath></defs>
<g clip-path="url(#vp)">
<g font-size="40" font-weight="100" font-family="Noto Sans CJK SC,sans-serif" fill="#00ffff" stroke="#00ffff" stroke-width=".5"><text transform="scale(.92 1)" y="227.5" x="1331.1 1356.5 1380.4 1408.7 1433.7 1459.8 1529 1550">TXD-1(1)</text><text transform="scale(.58 1)" y="226.5" x="2340.7 2383.6">屋面</text></g>
<path d="M1497.5 218 V230 M1526.5 218 V230 M1504 218 L1512 222 L1520 218" fill="none" stroke="#ff0000" stroke-width="1.3"/>
<path d="M1497.5 243 V233 Q1497.5 229.5 1501 229.5 H1523 Q1526.5 229.5 1526.5 233 V243 M1500 243 V234 Q1500 232 1502 232 H1522 Q1524 232 1524 234 V243" fill="none" stroke="#ffff00" stroke-width="1.2"/>
<path d="M1276 962 V243 H1652 M1280.5 245.9 H1652" fill="none" stroke="#ff00ff" stroke-width="1.3"/>
<path d="M1280.5 247 V962" stroke="#ffff00" stroke-width="1.3"/>
<path d="M1322 243 L1288.2 596 Q1286 640 1290.7 700 L1317 962" fill="none" stroke="#ff00ff" stroke-width="1.2"/>
<path d="M1276 428.4 L1278.4 428.4 L1283.6 446 L1285 429 L1286.6 429 L1288 451 L1292 429.4 L1295.4 428.4 L1299 440 L1303.4 425.4 L1311 425.2 V435.4 L1330 417.6 L1332.2 417 V744 L1330 750 H1327 V757 H1322 V765 H1317 V773 H1313 V781 H1309 L1307 790.6 H1276" fill="none" stroke="#ff00ff" stroke-width="1.2"/>
<circle cx="1329.4" cy="246.6" r="4" fill="#00ffff"/><path d="M1329.4 246.6 L1306 275" stroke="#00ffff" stroke-width="1.2"/><path d="M1293.7 290.3 L1306.5 265.5 L1314 271.8 Z" fill="#00ffff"/>
<path d="M1287.3 462 V790" stroke="#00ffff" stroke-width="1.2"/>
<circle cx="1287.3" cy="548.5" r="4.4" fill="#222833" stroke="#00ffff" stroke-width="1.1"/>
<circle cx="1287.3" cy="615.8" r="4.4" fill="#222833" stroke="#00ffff" stroke-width="1.1"/>
<circle cx="1287.3" cy="683.3" r="4.4" fill="#222833" stroke="#00ffff" stroke-width="1.1"/>
<circle cx="1287.3" cy="750.5" r="4.4" fill="#222833" stroke="#00ffff" stroke-width="1.1"/>
<path d="M1287.3 626.6 H1652" stroke="#ff0000" stroke-width="1.3"/><path d="M1276 626.6 H1287" stroke="#ff00ff" stroke-width="1.2"/>
<path d="M1354.5 318 V583.5 M1354.5 301.5 L1351.8 318.5 H1357.2 Z" fill="none" stroke="#9a9a9a" stroke-width="1"/>
<path d="M1362.7 661 V940 M1362.7 954 L1360 940 H1365.4 Z" fill="none" stroke="#9a9a9a" stroke-width="1"/>
<text transform="translate(1362.5 464) rotate(-90)" font-size="10.5" font-family="Liberation Mono,monospace" fill="#9a9a9a">1=5%</text>
<text transform="translate(1354 788) rotate(90)" font-size="10.5" font-family="Liberation Mono,monospace" fill="#9a9a9a">1=5%</text>
<path d="M1333.3 289 H1660 M1333.3 333 H1660 M1333.3 376.3 H1660 M1333.3 289 V376.3 M1354.5 289 V376.3 M1375.6 289 V376.3 M1396.8 289 V376.3 M1418.0 289 V376.3 M1439.2 289 V376.3 M1460.3 289 V376.3 M1481.5 289 V376.3 M1502.7 289 V376.3 M1523.8 289 V376.3 M1545.0 289 V376.3 M1566.2 289 V376.3 M1587.3 289 V376.3 M1608.5 289 V376.3 M1629.7 289 V376.3 M1650.9 289 V376.3" fill="none" stroke="#00ffff" stroke-width="1.4"/>
<path d="M1333.3 383.7 H1660 M1333.3 427.5 H1660 M1333.3 471 H1660 M1333.3 383.7 V471 M1354.5 383.7 V471 M1375.6 383.7 V471 M1396.8 383.7 V471 M1418.0 383.7 V471 M1439.2 383.7 V471 M1460.3 383.7 V471 M1481.5 383.7 V471 M1502.7 383.7 V471 M1523.8 383.7 V471 M1545.0 383.7 V471 M1566.2 383.7 V471 M1587.3 383.7 V471 M1608.5 383.7 V471 M1629.7 383.7 V471 M1650.9 383.7 V471" fill="none" stroke="#00ffff" stroke-width="1.4"/>
<path d="M1333.3 479.5 H1660 M1333.3 523 H1660 M1333.3 566 H1660 M1333.3 479.5 V566 M1354.5 479.5 V566 M1375.6 479.5 V566 M1396.8 479.5 V566 M1418.0 479.5 V566 M1439.2 479.5 V566 M1460.3 479.5 V566 M1481.5 479.5 V566 M1502.7 479.5 V566 M1523.8 479.5 V566 M1545.0 479.5 V566 M1566.2 479.5 V566 M1587.3 479.5 V566 M1608.5 479.5 V566 M1629.7 479.5 V566 M1650.9 479.5 V566" fill="none" stroke="#00ffff" stroke-width="1.4"/>
<path d="M1345.7 661.3 H1660 M1345.7 705.6 H1660 M1345.7 749 H1660 M1345.7 661.3 V749 M1366.8 661.3 V749 M1388.0 661.3 V749 M1409.1 661.3 V749 M1430.3 661.3 V749 M1451.4 661.3 V749 M1472.5 661.3 V749 M1493.7 661.3 V749 M1514.8 661.3 V749 M1536.0 661.3 V749 M1557.1 661.3 V749 M1578.2 661.3 V749 M1599.4 661.3 V749 M1620.5 661.3 V749 M1641.7 661.3 V749" fill="none" stroke="#00ffff" stroke-width="1.4"/>
<path d="M1324.4 757.3 H1660 M1324.4 801.3 H1660 M1324.4 844.4 H1660 M1324.4 757.3 V844.4 M1345.6 757.3 V844.4 M1366.7 757.3 V844.4 M1387.9 757.3 V844.4 M1409.0 757.3 V844.4 M1430.2 757.3 V844.4 M1451.3 757.3 V844.4 M1472.5 757.3 V844.4 M1493.6 757.3 V844.4 M1514.8 757.3 V844.4 M1535.9 757.3 V844.4 M1557.1 757.3 V844.4 M1578.2 757.3 V844.4 M1599.4 757.3 V844.4 M1620.5 757.3 V844.4 M1641.7 757.3 V844.4" fill="none" stroke="#00ffff" stroke-width="1.4"/>
<path d="M1324.4 852.3 H1660 M1324.4 895.8 H1660 M1324.4 940 H1660 M1324.4 852.3 V940 M1345.6 852.3 V940 M1366.7 852.3 V940 M1387.9 852.3 V940 M1409.0 852.3 V940 M1430.2 852.3 V940 M1451.3 852.3 V940 M1472.5 852.3 V940 M1493.6 852.3 V940 M1514.8 852.3 V940 M1535.9 852.3 V940 M1557.1 852.3 V940 M1578.2 852.3 V940 M1599.4 852.3 V940 M1620.5 852.3 V940 M1641.7 852.3 V940" fill="none" stroke="#00ffff" stroke-width="1.4"/>
<circle cx="1214.2" cy="565.8" r="24.6" fill="none" stroke="#ecec00" stroke-width="1.2"/>
<path d="M1102.5 483 L1300 500.6" stroke="#f5120f" stroke-width="3.6" stroke-linecap="round"/><path d="M1312.5 502 L1296.5 492.5 L1299.8 500.6 L1295 508.5 Z" fill="#f5120f"/>
<g fill="none" stroke="#e4e4e4" stroke-width="1.6"><path d="M1591 235.5 H1601" stroke-width="2.6"/><path d="M1614 231.5 V229.5 H1620.5 V236.5 H1619"/><rect x="1611.6" y="232" width="6.4" height="6.4"/><path d="M1632.5 229.5 L1641 238 M1641 229.5 L1632.5 238" stroke-width="2"/></g>
<circle cx="1569.3" cy="324" r="53.5" fill="none" stroke="rgba(150,153,160,.32)" stroke-width="13"/>
<rect x="1544" y="298.6" width="51.5" height="51.5" fill="rgba(210,212,216,.78)"/><rect x="1553.5" y="308" width="32" height="32" fill="rgba(150,158,172,.45)"/>
<text x="1569.5" y="333" font-size="24" font-family="Noto Sans CJK SC,sans-serif" fill="#8c97a3" text-anchor="middle">上</text>
<text x="1569.3" y="276" font-size="18" font-weight="500" font-family="Noto Sans CJK SC,sans-serif" fill="#999a9e" text-anchor="middle">北</text>
<text x="1569.3" y="391" font-size="18" font-weight="500" font-family="Noto Sans CJK SC,sans-serif" fill="#999a9e" text-anchor="middle">南</text>
<text x="1513" y="331.5" font-size="18" font-weight="500" font-family="Noto Sans CJK SC,sans-serif" fill="#999a9e" text-anchor="middle">西</text>
<text x="1626.5" y="331.5" font-size="18" font-weight="500" font-family="Noto Sans CJK SC,sans-serif" fill="#999a9e" text-anchor="middle">东</text>
<rect x="1546.4" y="412.6" width="47" height="17" rx="3" fill="rgba(190,195,205,.8)"/><text x="1550" y="425.5" font-size="11" font-family="Liberation Sans,sans-serif" fill="#7a7f88">WCS</text><path d="M1579.5 419 H1586.5 L1583 424 Z" fill="none" stroke="#8a8f98" stroke-width="1"/>
<rect x="1616" y="454.3" width="33" height="212.5" rx="3" fill="rgba(125,130,138,.52)"/>
<g fill="none" stroke="rgba(150,155,162,.42)" stroke-width="1.3"><circle cx="1642.5" cy="459.5" r="2.6"/><circle cx="1632.5" cy="485" r="9.5"/><circle cx="1632.5" cy="485" r="5"/><path d="M1624 540 q2-14 8-14 q7 0 9 14 q-8 6-17 0z"/><path d="M1620 543.5 L1630 553 M1620 553 L1630 543.5"/><circle cx="1636.5" cy="556.5" r="4.5"/><path d="M1640 560 L1645 565"/><ellipse cx="1632.5" cy="594" rx="11" ry="4.5"/><path d="M1632.5 582 V606"/><rect x="1620.5" y="634" width="17" height="11.5"/><path d="M1626 637 L1632 640 L1626 643 Z"/><rect x="1620" y="625.5" width="5" height="4"/><rect x="1630" y="625.5" width="5" height="4"/><rect x="1640" y="625.5" width="5" height="4"/></g>
<g fill="rgba(110,114,122,.8)"><path d="M1630 503 h5 l-2.5 3z"/><path d="M1630 573 h5 l-2.5 3z"/><path d="M1630 612 h5 l-2.5 3z"/></g>
<path d="M1617 475 H1648 M1617 510 H1648 M1617 580 H1648 M1617 620 H1648" stroke="rgba(100,105,112,.45)" stroke-width="1"/>
</g>
<rect x="1652" y="218" width="1.5" height="744" fill="#2c3341"/>
</svg>
<div class="abs" style="left:1654px;top:220px;width:266px;height:23px;background:#2c3341;border-radius:5px 0 0 0"></div>
<svg style="left:1660px;top:225px" width="4" height="10" viewBox="0 0 4 10"><g fill="#aeb3bd"><rect x="0" y="0" width="1" height="1"/><rect x="2" y="0" width="1" height="1"/><rect x="0" y="2" width="1" height="1"/><rect x="2" y="2" width="1" height="1"/><rect x="0" y="4" width="1" height="1"/><rect x="2" y="4" width="1" height="1"/><rect x="0" y="6" width="1" height="1"/><rect x="2" y="6" width="1" height="1"/><rect x="0" y="8" width="1" height="1"/><rect x="2" y="8" width="1" height="1"/></g></svg>
<span class="t" style="left:1668.5px;top:224.0px;font-size:12px;color:#f2f3f5;">统计信息</span>
<div class="abs" style="left:1653px;top:242px;width:267px;height:744px;background:#3b4454;border-radius:4px 0 0 0"></div>
<span class="t" style="left:1779.5px;top:254.0px;font-size:14px;color:#9da3ae;">参数管理</span>
<div class="abs" style="left:1846px;top:246px;width:1px;height:30px;background:#333a48;"></div>
<span class="t" style="left:1859.5px;top:254.0px;font-size:14px;color:#9da3ae;">云端上传</span>
<div class="abs" style="left:1654px;top:278px;width:266px;height:36px;background:#2c3341;"></div>
<span class="t" style="left:1688px;top:289.0px;font-size:14px;color:#fff;">信息面板</span>
<div class="abs" style="left:1686px;top:311px;width:60px;height:3px;background:#e4e6ea;border-radius:1px"></div>
<span class="t" style="left:1808px;top:289.0px;font-size:14px;color:#fff;">操作日志</span>
<span class="t" style="left:1674.5px;top:337.0px;font-size:14px;color:#fff;font-weight:bold;">项目统计信息</span>
<span class="t" style="left:1875px;top:338.0px;font-size:12px;color:#fff;">刷新</span>
<div class="abs" style="left:1654px;top:366px;width:266px;height:1px;background:#333a48;"></div>
<span class="t" style="left:1674.5px;top:380.5px;font-size:17px;color:#fff;font-weight:bold;">2460.62</span>
<span class="t" style="left:1800.5px;top:380.5px;font-size:17px;color:#fff;font-weight:bold;">0.306</span>
<span class="t" style="left:1674.5px;top:410.5px;font-size:12px;color:#aab0bb;">总面积(㎡)</span>
<span class="t" style="left:1800.5px;top:410.5px;font-size:12px;color:#aab0bb;">装机容量(MW)</span>
<span class="t" style="left:1674.5px;top:446.5px;font-size:17px;color:#fff;font-weight:bold;letter-spacing:.55px">0.306MW/1个</span>
<span class="t" style="left:1800.5px;top:446.5px;font-size:17px;color:#fff;font-weight:bold;">--</span>
<span class="t" style="left:1674.5px;top:476.5px;font-size:12px;color:#aab0bb;">彩钢瓦屋面</span>
<span class="t" style="left:1800.5px;top:476.5px;font-size:12px;color:#aab0bb;">水泥屋面</span>
<span class="t" style="left:1674.5px;top:512.0px;font-size:17px;color:#fff;font-weight:bold;">--</span>
<span class="t" style="left:1674.5px;top:541.5px;font-size:12px;color:#aab0bb;">车棚</span>
<span class="t" style="left:1674.5px;top:577.5px;font-size:17px;color:#fff;font-weight:bold;">542</span>
<span class="t" style="left:1800.5px;top:577.5px;font-size:17px;color:#fff;font-weight:bold;">--</span>
<span class="t" style="left:1674.5px;top:607.5px;font-size:12px;color:#aab0bb;">组件数(块)</span>
<span class="t" style="left:1800.5px;top:607.5px;font-size:12px;color:#aab0bb;">高压接入柜</span>
<span class="t" style="left:1674.5px;top:643.0px;font-size:17px;color:#fff;font-weight:bold;">--</span>
<span class="t" style="left:1674.5px;top:672.5px;font-size:12px;color:#aab0bb;">逆变器数(台)</span>
<div class="abs" style="left:1654px;top:701px;width:266px;height:1px;background:#333a48;"></div>
<span class="t" style="left:1679px;top:717.0px;font-size:14px;color:#fff;font-weight:bold;">主体方案信息</span>
<div class="abs" style="left:1654px;top:746px;width:266px;height:1px;background:#333a48;"></div>
<div class="abs" style="left:1662px;top:759px;width:120px;height:28px;background:#2c3341;border-radius:6px;color:#fff;font-size:12px;line-height:28px;text-align:center">异常提示表</div>
<div class="abs" style="left:1799px;top:759px;width:120px;height:28px;background:#2c3341;border-radius:6px;color:#fff;font-size:12px;line-height:28px;text-align:center">汇流信息表</div>
<div class="abs" style="left:1654px;top:799px;width:266px;height:1px;background:#333a48;"></div>
<span class="t" style="left:1679px;top:815.0px;font-size:14px;color:#fff;font-weight:bold;">元素信息</span>
<div class="abs" style="left:1654px;top:844px;width:266px;height:1px;background:#333a48;"></div>
<div class="abs" style="left:1653px;top:985px;width:267px;height:1px;background:#4a5364;"></div>
<div class="abs" style="left:470px;top:938px;width:100px;height:19.5px;background:#595959;border-radius:2px;overflow:hidden"><span class="t" style="left:4px;top:7px;font-size:12px;color:#f4f4f4;font-family:'Liberation Mono','Noto Sans CJK SC',monospace">命令: *JSCOMPARE</span></div>
<div class="abs" style="left:408px;top:962px;width:57px;height:26px;background:#2c3341;border-radius:3px 0 0 3px"></div>
<div class="abs" style="left:464px;top:962px;width:1195.5px;height:25px;background:linear-gradient(#b4b4b6,#c6c6c8 60%,#c2c2c4);border-radius:2px"></div>
<span class="t" style="left:502px;top:967.8px;font-size:12.5px;color:#707070;font-style:italic;letter-spacing:.8px">键入命令</span>
<svg style="left:0;top:0" width="1920" height="1026" viewBox="0 0 1920 1026">
<g fill="#c4c4c4"><rect x="412" y="965" width="1.6" height="1.6"/><rect x="415" y="965" width="1.6" height="1.6"/><rect x="412" y="968" width="1.6" height="1.6"/><rect x="415" y="968" width="1.6" height="1.6"/><rect x="412" y="971" width="1.6" height="1.6"/><rect x="415" y="971" width="1.6" height="1.6"/><rect x="412" y="974" width="1.6" height="1.6"/><rect x="415" y="974" width="1.6" height="1.6"/><rect x="412" y="977" width="1.6" height="1.6"/><rect x="415" y="977" width="1.6" height="1.6"/><rect x="412" y="980" width="1.6" height="1.6"/><rect x="415" y="980" width="1.6" height="1.6"/></g>
<path d="M423 969.6 L431 977.6 M431 969.6 L423 977.6" stroke="#c9c9c9" stroke-width="1.8"/>
<path d="M444 981.5 L452.5 973 C451.5 970 453.5 967.5 456.8 968.2 L454.4 970.6 L455.6 972.2 L457.6 970 C458 973 455.6 975 453.4 974.2 L445.2 982.6 Z" fill="#c9c9c9"/>
<g fill="none" stroke="#e8e8e8" stroke-width="1"><path d="M435.3 952 V963.3"/><rect x="431.3" y="963.3" width="9.4" height="9.2"/><path d="M440.8 968.7 H485"/><path d="M490 966.6 L496.5 959 L503 966.6" stroke-width=".9"/></g>
<rect x="468.6" y="969.2" width="14.6" height="11" fill="none" stroke="#4a4a4a" stroke-width="1.2"/><rect x="468.6" y="969.2" width="14.6" height="2.4" fill="#4a4a4a"/><path d="M470.6 974 L473 975.6 L470.6 977.2 M474 978 H478" stroke="#4a4a4a" stroke-width="1" fill="none"/>
<path d="M486.5 972.6 H493.5 L490 976.6 Z" fill="#4a4a4a"/>
<path d="M1648.6 976 H1655 L1651.8 972.2 Z" fill="#4a4a4a"/>
<path d="M1276 968 H1651 M1317 962 L1313.5 972 L1309 975 L1308 981 L1305.5 984 L1305 987" fill="none" stroke="#f3a6f3" stroke-width="1" opacity=".85"/>
<!-- layout tabs -->
<path d="M66 989 C72 989 73 993 74.5 998 C76 1003 77 1006 83 1006 H107 C113 1006 114 1002 115.5 998 C117 993 118 989 124 989 Z" fill="#3b4454"/>
<path d="M117.5 994 C116.5 999 119 1006 125 1006 H164 C170 1006 171 1002 172.5 998 C174 993 175 989 181 989 H124 C120.5 989 118.5 991 117.5 994 Z" fill="#333a48"/>
<path d="M172 996 C171 1001 173.5 1006 179.5 1006 H217 C223 1006 224 1002 225.5 998 C227 993 228 989 234 989 H181 C176 989 173 992 172 996 Z" fill="#333a48"/>
<path d="M125 990 V1005 M163.5 990 V1005 M179 990 V1005 M217.5 990 V1005" stroke="#3d4554" stroke-width="1"/>
<path d="M238 989.6 H252.4 C252.4 997 249.5 1003.4 243 1003.4 H230 C233.5 1000.5 233.5 992.5 238 989.6 Z" fill="#333a48"/>
<path d="M237.2 997.4 H245 M241.1 993.4 V1001.4" stroke="#c3c7cf" stroke-width="1.5"/>
</svg>
<span class="t" style="left:82px;top:992.1px;font-size:12px;color:#fff;font-weight:bold">模型</span>
<span class="t" style="left:129.2px;top:992.1px;font-size:12px;color:#bfc4cd;">布局1</span>
<span class="t" style="left:183px;top:992.1px;font-size:12px;color:#bfc4cd;">布局2</span>
<div class="abs" style="left:1385px;top:1010px;width:27.4px;height:16px;background:#3b4454;"></div>
<div class="abs" style="left:1415.3px;top:1010px;width:62.7px;height:16px;background:#3b4454;"></div>
<div class="abs" style="left:1481.7px;top:1010px;width:22.3px;height:16px;background:#5b8cc8;"></div>
<div class="abs" style="left:1504px;top:1010px;width:40px;height:16px;background:#3b4454;"></div>
<div class="abs" style="left:1544px;top:1010px;width:38.6px;height:16px;background:#3b4454;"></div>
<div class="abs" style="left:1585px;top:1010px;width:22px;height:16px;background:#5b8cc8;"></div>
<div class="abs" style="left:1609px;top:1010px;width:21.7px;height:16px;background:#5b8cc8;"></div>
<div class="abs" style="left:1630.7px;top:1010px;width:15.8px;height:16px;background:#3b4454;"></div>
<div class="abs" style="left:1650.8px;top:1010px;width:21.5px;height:16px;background:#5b8cc8;"></div>
<div class="abs" style="left:1672.3px;top:1010px;width:82.5px;height:16px;background:#3b4454;"></div>
<div class="abs" style="left:1758px;top:1010px;width:39px;height:16px;background:#3b4454;"></div>
<div class="abs" style="left:1797px;top:1010px;width:25px;height:16px;background:#3b4454;"></div>
<div class="abs" style="left:1825.6px;top:1010px;width:23.4px;height:16px;background:#3b4454;"></div>
<div class="abs" style="left:1852px;top:1010px;width:22.3px;height:16px;background:#3b4454;"></div>
<div class="abs" style="left:1877.7px;top:1010px;width:22.3px;height:16px;background:#3b4454;"></div>
<div class="abs" style="left:1900px;top:1010px;width:20px;height:16px;background:#3b4454;"></div>
<span class="t" style="left:1387.5px;top:1016.5px;font-size:12px;color:#f0f1f3;">模型</span>
<span class="t" style="left:1727px;top:1017.5px;font-size:12px;color:#f0f1f3;letter-spacing:-.5px">1:1</span>
<svg style="left:0;top:2.5px" width="1920" height="1026" viewBox="0 0 1920 1026"><g fill="none" stroke="#e6e6e6" stroke-width="1.2">
<path d="M1421 1014 V1026 M1427 1014 V1026 M1433 1014 V1026 M1418 1017 H1436 M1418 1023 H1436"/>
<path d="M1445 1014.5 h2 M1450 1014.5 h2 M1455 1014.5 h2 M1445 1019.5 h2 M1450 1019.5 h2 M1455 1019.5 h2" stroke-width="1.8"/>
<path d="M1487 1014 V1026 M1487 1024.5 H1494" stroke="#fff" stroke-width="1.5"/>
<circle cx="1516" cy="1024" r="6.5"/><path d="M1514 1026 L1523 1014"/>
<path d="M1590 1026 L1603 1013" stroke="#fff"/><rect x="1594.6" y="1018.4" width="3.2" height="3.2" fill="#fff" stroke="none"/>
<path d="M1615 1026 V1016 H1629 V1026" stroke="#fff"/><rect x="1612.6" y="1013.4" width="4" height="4" fill="#5b8cc8" stroke="#fff" stroke-width="1"/>
<circle cx="1668" cy="1015.6" r="2.2" stroke="#fff"/>
<path d="M1798.5 1022.5 H1820.5 M1809.5 1012 V1026" stroke-width="1.8"/>
<rect x="1829" y="1013" width="5" height="5"/><circle cx="1842" cy="1021.5" r="3.6"/><path d="M1829 1023 L1832 1026"/>
<path d="M1884 1026 V1015 H1897 V1026 M1887 1025 L1894 1018 M1890 1017.6 H1894.4 V1022" />
<path d="M1902 1014 H1920 M1902 1020 H1920" stroke-width="1.8"/>
</g>
<path d="M1466 1020 h7 l-3.5 4z M1532 1020 h7 l-3.5 4z M1571 1020 h7 l-3.5 4z M1635 1020 h7 l-3.5 4z M1743 1020 h7 l-3.5 4z M1785 1020 h7 l-3.5 4z" fill="#d6d6d6"/>
<path d="M1553 1013 L1560 1026" stroke="#e8434d" stroke-width="1.2"/><path d="M1556.5 1012 V1026" stroke="#47c45a" stroke-width="1.2"/><path d="M1553 1026 L1558 1020" stroke="#e6e6e6" stroke-width="1"/>
<path d="M1661.5 1012.5 L1665 1026 H1658 Z M1690.5 1013 L1694.5 1026 H1686.5 Z M1719 1013 L1722.5 1026 H1715.5 Z" fill="#e0e0e0"/>
<path d="M1697 1013 L1694 1019 H1697 L1695.5 1023" stroke="#e0e0e0" stroke-width="1.2" fill="none"/>
<circle cx="1769.5" cy="1025" r="6.6" fill="none" stroke="#e0e0e0" stroke-width="3.2" stroke-dasharray="3 2.2"/><circle cx="1769.5" cy="1025" r="4.6" fill="#e0e0e0"/><circle cx="1769.5" cy="1025" r="2" fill="#3b4454"/>
<rect x="1857" y="1015.5" width="11" height="8" fill="none" stroke="#5bb8f0" stroke-width="1.2"/><rect x="1861" y="1012.6" width="3.4" height="3.4" fill="#5bb8f0"/><rect x="1856" y="1022" width="10" height="4" fill="#f0b93a"/><path d="M1864 1024 l3 2 l4-5" stroke="#47c45a" stroke-width="1.6" fill="none"/>
</svg>
<div id="dlg" class="abs">
<span class="l" style="left:10px;top:9.5px;color:#fff">初步排布</span>
<svg style="left:641px;top:11px" width="12" height="12" viewBox="0 0 12 12"><path d="M1 1 L11 11 M11 1 L1 11" stroke="#e6e6e6" stroke-width="1.1" fill="none"/></svg>
<span class="l" style="left:10px;top:42.0px;">容量上限</span>
<div class="in" style="left:10px;top:65px;width:200px;height:28px;">30<i>MW</i></div>
<span class="h" style="left:10px;top:105.5px;">目标排布屋面</span>
<div class="in sel" style="left:10px;top:131px">彩钢瓦<svg style="right:6px;top:9px" width="16" height="10" viewBox="0 0 16 10"><path d="M1 1.2 L8 8.6 L15 1.2" fill="none" stroke="#f2f2f2" stroke-width="1.3"/></svg></div>
<div class="in sel" style="left:230px;top:131px">普通彩钢瓦解决方案<svg style="right:6px;top:9px" width="16" height="10" viewBox="0 0 16 10"><path d="M1 1.2 L8 8.6 L15 1.2" fill="none" stroke="#f2f2f2" stroke-width="1.3"/></svg></div>
<div class="btnw" style="left:450px;top:131px;width:68px;">选择屋面</div>
<span class="h" style="left:10px;top:171.0px;">设备选型</span>
<span class="l" style="left:10px;top:203.5px;">逆变器型号</span>
<div class="btnw" style="left:10px;top:227px;width:104px;">选择逆变器型号</div>
<span class="l" style="left:10px;top:271.5px;">光伏组件型号</span>
<div class="btnw" style="left:10px;top:295px;width:92px;">选择组件型号</div>
<span class="h" style="left:10px;top:345.0px;">组件排布</span>
<span class="l" style="left:10px;top:372.5px;">排布规则</span>
<span class="l" style="left:450px;top:372.5px;">其他</span>
<span class="radio on" style="left:10px;top:396px"></span>
<span class="l" style="left:32px;top:398.0px;">最大化排布</span>
<span class="radio" style="left:100px;top:396px"></span>
<span class="l" style="left:122px;top:398.0px;">规整排布</span>
<span class="abs" style="left:450px;top:396px;width:16px;height:16px;border:1.2px solid #a6aab2;border-radius:2.5px"></span>
<span class="l" style="left:474px;top:398.0px;">考虑运维通道</span>
<span class="q" style="left:554px;top:398.5px">?</span>
<span class="l" style="left:10px;top:434.0px;">组件排布方式</span>
<span class="l" style="left:230px;top:434.0px;">组件阵列行数</span>
<span class="l" style="left:450px;top:434.0px;">阵列行间距</span>
<div class="in sel" style="left:10px;top:457px">竖排<svg style="right:6px;top:9px" width="16" height="10" viewBox="0 0 16 10"><path d="M1 1.2 L8 8.6 L15 1.2" fill="none" stroke="#f2f2f2" stroke-width="1.3"/></svg></div>
<div class="in" style="left:230px;top:457px;width:200px;height:28px;">2</div>
<div class="in" style="left:450px;top:457px;width:200px;height:28px;">400<i>mm</i></div>
<span class="l" style="left:10px;top:507.0px;">组件串线数</span>
<span class="q" style="left:73px;top:508px">?</span>
<span class="l" style="left:230px;top:507.0px;">组件阵列列数</span>
<span class="l" style="left:450px;top:507.0px;">阵列列间距</span>
<div class="in ph" style="left:10px;top:530px;width:200px;height:28px;">请输入</div>
<div class="in ph" style="left:230px;top:530px;width:200px;height:28px;">请输入</div>
<div class="in" style="left:450px;top:530px;width:200px;height:28px;">400<i>mm</i></div>
<span class="l" style="left:10px;top:584.5px;">阵列与其他障碍物间距</span>
<span class="l" style="left:230px;top:582.0px;">组件长边间距</span>
<span class="q" style="left:310px;top:581px">?</span>
<span class="l" style="left:450px;top:582.0px;">组件短边间距</span>
<span class="q" style="left:530px;top:581px">?</span>
<div class="in" style="left:10px;top:608px;width:200px;height:28px;">400<i>mm</i></div>
<div class="in" style="left:230px;top:608px;width:200px;height:28px;">20<i>mm</i></div>
<div class="in" style="left:450px;top:608px;width:200px;height:28px;">20<i>mm</i></div>
<span class="l" style="left:10px;top:655.0px;">屋面轮廓内缩</span>
<span class="q" style="left:90px;top:654px">?</span>
<span class="l" style="left:230px;top:657.5px;">阵列与采光带间距</span>
<div class="in" style="left:10px;top:681px;width:200px;height:28px;">2500<i>mm</i></div>
<div class="in" style="left:230px;top:681px;width:200px;height:28px;">400<i>mm</i></div>
<span class="h" style="left:10px;top:731.0px;">阴影分析</span>
<span class="l" style="left:10px;top:758.5px;">阴影类型</span>
<span class="l" style="left:230px;top:763.5px;">遮挡比例(%)</span>
<span class="q" style="left:305px;top:760px">?</span>
<span class="radio on" style="left:10px;top:787px"></span>
<span class="l" style="left:32px;top:789.0px;">全年</span>
<span class="radio" style="left:100px;top:787px"></span>
<span class="l" style="left:122px;top:789.0px;">冬至日</span>
<div class="in" style="left:230px;top:792px;width:200px;height:18px;border-radius:5px 5px 0 0;overflow:hidden;line-height:27px">0</div>
<span class="abs" style="left:666px;top:30px;width:2px;height:770px;background:#262c38;border-radius:1px"></span>
<div class="btnd" style="left:20px;top:826px;width:72px;">恢复默认</div>
<div class="btnd" style="left:112px;top:826px;width:96px;">应用上次参数</div>
<div class="btnw" style="left:540px;top:826px;width:52px;">确认</div>
<div class="btnd" style="left:602px;top:826px;width:46px;background:transparent;border:1px solid #cfd2d8;line-height:26px">取消</div>
</div>
</body>
</html>
